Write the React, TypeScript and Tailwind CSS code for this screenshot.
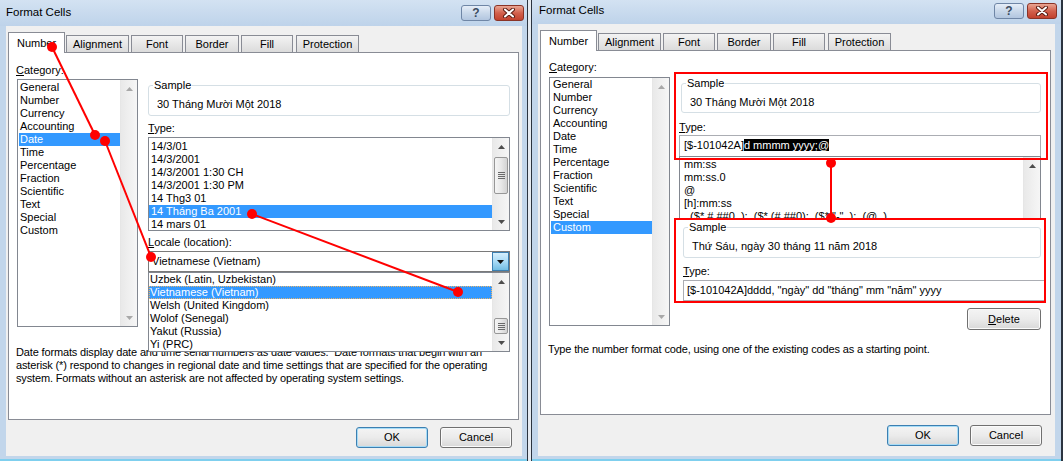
import React from 'react';

// small scrollbar arrow
function Tri({ down, c = '#4d4d4d' }: { down?: boolean; c?: string }) {
  return (
    <svg width="7" height="4" viewBox="0 0 7 4">
      <polygon points={down ? '0,0 7,0 3.5,4' : '0,4 3.5,0 7,4'} fill={c} />
    </svg>
  );
}

function Thumb({ className }: { className: string }) {
  return (
    <div className={`mx-[1px] flex flex-col items-center justify-center gap-[1px] rounded-[2px] border border-[#979797] bg-gradient-to-r from-[#f5f5f5] via-[#e8e8e8] to-[#d3d3d3] ${className}`}>
      <div className="h-px w-[7px] bg-[#6a6a6a]" />
      <div className="h-px w-[7px] bg-[#6a6a6a]" />
      <div className="h-px w-[7px] bg-[#6a6a6a]" />
      <div className="h-px w-[7px] bg-[#6a6a6a]" />
    </div>
  );
}

function ScrollBar({ children, disabled }: { children?: React.ReactNode; disabled?: boolean }) {
  const c = disabled ? '#a8a8a8' : '#4d4d4d';
  return (
    <div className="flex w-[17px] shrink-0 flex-col border-l border-[#e6e6e6] bg-gradient-to-r from-[#e9e9e9] to-[#f6f6f6]">
      <div className="flex h-[17px] items-center justify-center">
        <Tri c={c} />
      </div>
      <div className="flex flex-1 flex-col">{children}</div>
      <div className="flex h-[17px] items-center justify-center">
        <Tri down c={c} />
      </div>
    </div>
  );
}

function ListBox({ className, children, bar }: { className: string; children: React.ReactNode; bar: React.ReactNode }) {
  return (
    <div className={`flex overflow-hidden border border-[#828790] bg-white ${className}`}>
      <div className="min-w-0 flex-1 overflow-hidden">{children}</div>
      {bar}
    </div>
  );
}

function Rows({ items, sel, row, focus }: { items: string[]; sel?: string; row: string; focus?: boolean }) {
  return (
    <>
      {items.map((t) => (
        <div
          key={t}
          className={`h-[13px] whitespace-nowrap ${row} ${
            t === sel ? 'bg-[#3399ff] text-white' : ''
          } ${t === sel && focus ? 'outline-1 -outline-offset-1 outline-dotted outline-[#e8b46a]' : ''}`}
        >
          {t}
        </div>
      ))}
    </>
  );
}

function Group({ value, className }: { value: string; className: string }) {
  return (
    <div className={`relative rounded-[3px] border border-[#d5dfe5] bg-white pl-[8px] pt-[12px] ${className}`}>
      <span className="absolute -top-[7px] left-[4px] bg-white px-[1px]">Sample</span>
      {value}
    </div>
  );
}

function TitleButtons({ className }: { className: string }) {
  return (
    <div className={`flex gap-[3px] ${className}`}>
      <div className="flex h-[16px] w-[30px] items-center justify-center rounded-[3px] border border-[#6f86a6] bg-gradient-to-b from-[#e6eef8] via-[#c9d8ea] to-[#b2c6df] text-[12px] font-bold leading-none text-[#3b4b60]">
        ?
      </div>
      <div className="flex h-[16px] w-[30px] items-center justify-center rounded-[3px] border border-[#8a3326] bg-gradient-to-b from-[#e9a593] via-[#d2604c] to-[#c2412d]">
        <svg width="14" height="10" viewBox="0 0 14 10">
          <path d="M3 1.5 L11 8.5 M11 1.5 L3 8.5" stroke="#5a1c12" strokeWidth="4" strokeLinecap="round" />
          <path d="M3 1.5 L11 8.5 M11 1.5 L3 8.5" stroke="#ffffff" strokeWidth="2" strokeLinecap="round" />
        </svg>
      </div>
    </div>
  );
}

const TABS: [string, string][] = [
  ['Alignment', 'ml-[1px] w-[63px]'],
  ['Font', 'ml-[2px] w-[52px]'],
  ['Border', 'ml-[2px] w-[54px]'],
  ['Fill', 'ml-[2px] w-[52px]'],
  ['Protection', 'ml-[3px] w-[63px]'],
];

function Tabs() {
  return (
    <div className="flex h-[21px] items-end">
      <div className="relative z-10 flex h-[21px] w-[57px] justify-center border border-b-0 border-[#898c95] bg-white pt-[4px]">
        Number
      </div>
      {TABS.map(([t, w]) => (
        <div
          key={t}
          className={`flex h-[18px] justify-center border border-b-0 border-[#898c95] bg-gradient-to-b from-[#f3f3f3] to-[#dadada] pt-[2px] ${w}`}
        >
          {t}
        </div>
      ))}
    </div>
  );
}

function Btn({ children, primary, className = '' }: { children: React.ReactNode; primary?: boolean; className?: string }) {
  return (
    <div
      className={`flex h-[21px] w-[72px] items-center justify-center rounded-[3px] border bg-gradient-to-b from-[#f4f4f4] via-[#ebebeb] to-[#d8d8d8] ${
        primary
          ? 'border-[#3c7fb1] shadow-[inset_0_0_0_1px_#a6dcf7]'
          : 'border-[#707070] shadow-[inset_0_0_0_1px_#fbfbfb]'
      } ${className}`}
    >
      {children}
    </div>
  );
}

const CATEGORIES = ['General', 'Number', 'Currency', 'Accounting', 'Date', 'Time', 'Percentage', 'Fraction', 'Scientific', 'Text', 'Special', 'Custom'];
const DATE_TYPES = ['14/3/01', '14/3/2001', '14/3/2001 1:30 CH', '14/3/2001 1:30 PM', '14 Thg3 01', '14 Tháng Ba 2001', '14 mars 01'];
const LOCALES = ['Uzbek (Latin, Uzbekistan)', 'Vietnamese (Vietnam)', 'Welsh (United Kingdom)', 'Wolof (Senegal)', 'Yakut (Russia)', 'Yi (PRC)'];
const CUSTOM = ['mm:ss', 'mm:ss.0', '@', '[h]:mm:ss', '_($* #,##0_);_($* (#,##0);_($* "-"_);_(@_)', '_(* #,##0_);_(* (#,##0);_(* "-"_);_(@_)'];

function LeftDialog() {
  return (
    <div className="flex h-[461px] w-[528px] flex-col border-r border-[#2b3440] bg-[#c2d6eb]">
      <div className="flex h-[26px] items-start bg-gradient-to-b from-[#d3e2f2] to-[#bed3ea] pl-[6px] pr-[3px]">
        <span className="mt-[6px] text-[11.5px]">Format Cells</span>
        <TitleButtons className="ml-auto mt-[5px]" />
      </div>
      <div className="ml-[6px] mr-[5px] flex h-[430px] flex-col bg-[#f0f0f0] pl-[2px] pt-[6px]">
        <Tabs />
        <div className="-mt-px h-[368px] w-[511px] border border-[#898c95] bg-white pl-[7px]">
          <div className="flex pt-[11px]">
            <div className="w-[122px]">
              <div className="h-[13px]">
                <u>C</u>ategory:
              </div>
              <ListBox className="ml-[1px] mt-[2px] h-[248px] w-[121px]" bar={<ScrollBar disabled />}>
                <div className="pt-[1px]">
                  <Rows items={CATEGORIES} sel="Date" row="ml-[1px] pl-[1px]" />
                </div>
              </ListBox>
            </div>
            <div className="relative ml-[10px] w-[362px] pt-[21px]">
              <Group value="30 Tháng Mười Một 2018" className="h-[31px]" />
              <div className="mt-[6px] h-[13px]">
                <u>T</u>ype:
              </div>
              <ListBox
                className="mt-[2px] h-[94px]"
                bar={
                  <ScrollBar>
                    <Thumb className="mt-[2px] h-[37px]" />
                  </ScrollBar>
                }
              >
                <div className="pt-[2px]">
                  <Rows items={DATE_TYPES} sel="14 Tháng Ba 2001" row="pl-[2px]" />
                </div>
              </ListBox>
              <div className="mt-[5px] h-[13px]">
                <u>L</u>ocale (location):
              </div>
              <div className="mt-[2px] flex h-[21px] border border-[#7a7a7a] bg-white">
                <div className="flex-1 pl-[3px] pt-[3px]">Vietnamese (Vietnam)</div>
                <div className="flex w-[17px] items-center justify-center border border-[#3c7fb1] bg-gradient-to-b from-[#d6effc] via-[#a9dbf6] to-[#72bde3]">
                  <Tri down c="#111111" />
                </div>
              </div>
              <ListBox
                className="absolute left-0 top-[208px] z-20 h-[80px] w-[362px] border-[#646464]"
                bar={
                  <ScrollBar>
                    <div className="flex-1" />
                    <Thumb className="h-[16px]" />
                  </ScrollBar>
                }
              >
                <Rows items={LOCALES} sel="Vietnamese (Vietnam)" row="pl-[1px]" focus />
              </ListBox>
            </div>
          </div>
          <p className="mt-[19px] whitespace-nowrap tracking-[-0.15px]">
            Date formats display date and time serial numbers as date values.&nbsp; Date formats that begin with an
            <br />
            asterisk (*) respond to changes in regional date and time settings that are specified for the operating
            <br />
            system. Formats without an asterisk are not affected by operating system settings.
          </p>
        </div>
        <div className="mt-[7px] flex justify-end gap-[12px] pr-[10px]">
          <Btn primary>OK</Btn>
          <Btn>Cancel</Btn>
        </div>
      </div>
      <div className="flex-1 border-b-2 border-[#7fcfee]" />
    </div>
  );
}

function RightDialog() {
  return (
    <div className="flex h-[461px] w-[531px] flex-col border-r-2 border-[#2b3440] bg-[#c2d6eb]">
      <div className="flex h-[24px] items-start bg-gradient-to-b from-[#d3e2f2] to-[#bed3ea] pl-[7px] pr-[4px]">
        <span className="mt-[4px] text-[11.5px]">Format Cells</span>
        <TitleButtons className="ml-auto mt-[3px]" />
      </div>
      <div className="ml-[6px] mr-[6px] flex h-[432px] flex-col bg-[#f0f0f0] pl-[2px] pt-[6px]">
        <Tabs />
        <div className="-mt-px h-[365px] w-[511px] border border-[#898c95] bg-white pl-[7px]">
          <div className="flex pt-[10px]">
            <div className="w-[122px]">
              <div className="ml-[1px] h-[13px]">
                <u>C</u>ategory:
              </div>
              <ListBox className="ml-[1px] mt-[3px] h-[249px] w-[121px]" bar={<ScrollBar disabled />}>
                <Rows items={CATEGORIES} sel="Custom" row="ml-[1px] pl-[2px]" />
              </ListBox>
            </div>
            <div className="relative ml-[9px] flex w-[362px] flex-col pt-[22px]">
              <Group value="30 Tháng Mười Một 2018" className="ml-[2px] h-[30px]" />
              <div className="mt-[8px] h-[13px]">
                <u>T</u>ype:
              </div>
              <div className="mt-[1px] h-[22px] whitespace-nowrap border border-[#abadb3] bg-white pl-[4px] pt-[3px]">
                [$-101042A]<span className="bg-black text-white">d mmmm yyyy;@</span>
              </div>
              <ListBox className="-mt-px h-[147px]" bar={<ScrollBar />}>
                <div className="pt-[1px]">
                  <Rows items={CUSTOM} row="pl-[4px]" />
                </div>
              </ListBox>
              <Btn className="mt-[5px] h-[22px] w-[74px] self-end">
                <span>
                  <u>D</u>elete
                </span>
              </Btn>

              {/* red highlight boxes */}
              <div className="absolute left-[-5px] top-[11px] z-20 h-[88px] w-[374px] border-2 border-[#ff0000]" />
              <div className="absolute left-[-5px] top-[157px] z-20 flex h-[85px] w-[372px] flex-col border-2 border-[#ff0000] bg-white pl-[7px]">
                <Group value="Thứ Sáu, ngày 30 tháng 11 năm 2018" className="mr-[3px] mt-[7px] h-[31px]" />
                <div className="mt-[7px] h-[13px]">
                  <u>T</u>ype:
                </div>
                <div className="mt-[2px] h-[21px] whitespace-nowrap border border-r-0 border-[#abadb3] pl-[3px] pt-[3px]">
                  [$-101042A]dddd, "ngày" dd "tháng" mm "năm" yyyy
                </div>
              </div>
            </div>
          </div>
          <p className="mt-[13px] whitespace-nowrap tracking-[-0.15px]">
            Type the number format code, using one of the existing codes as a starting point.
          </p>
        </div>
        <div className="mt-[10px] flex justify-end gap-[11px] pr-[13px]">
          <Btn primary>OK</Btn>
          <Btn>Cancel</Btn>
        </div>
      </div>
      <div className="flex-1 border-b-2 border-[#7fcfee]" />
    </div>
  );
}

function Annotations() {
  const lines = [
    [52, 47, 95, 135],
    [105, 141, 151, 257],
    [252, 214, 458, 292],
    [831, 163, 831, 218],
  ];
  return (
    <svg className="pointer-events-none absolute left-0 top-0 z-50" width="1063" height="461">
      {lines.map(([x1, y1, x2, y2], i) => (
        <g key={i} fill="#ff0000">
          <line x1={x1} y1={y1} x2={x2} y2={y2} stroke="#ff0000" strokeWidth="2" />
          <circle cx={x1} cy={y1} r="5" />
          <circle cx={x2} cy={y2} r="5" />
        </g>
      ))}
    </svg>
  );
}

export default function App() {
  return (
    <div className="relative flex h-[461px] w-[1063px] overflow-hidden bg-[#dfe6ee] font-['Liberation_Sans',Arial,sans-serif] text-[11px] leading-[13px] text-black">
      <LeftDialog />
      <div className="w-[4px] border-r border-[#2b3440] bg-[#e6ebf1]" />
      <RightDialog />
      <Annotations />
    </div>
  );
}
